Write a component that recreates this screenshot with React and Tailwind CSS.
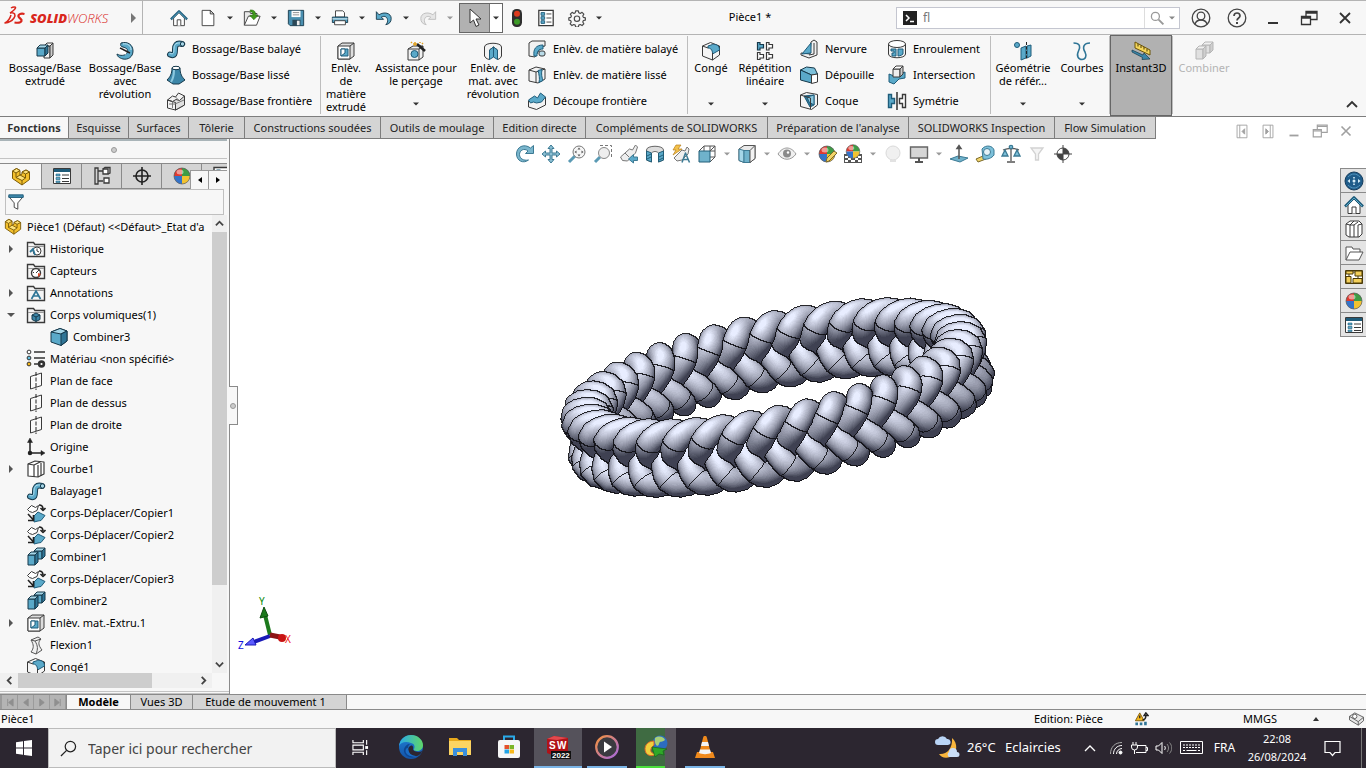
import React, { useState } from "react";
import clsx from "clsx";

const INK = "#3a3a3a";
const BLUE = "#5aa9c9";
const DEEP = "#1f5c7a";

/* ---------- icons, drawn on a 20 x 20 grid ---------- */

const Cube = ({ x, y, w = 9, h = 9, d = 4, front = BLUE, top = "#a5d6e8", side = "#2f7596", line = "#16394b" }) => (
  <g stroke={line} strokeLinejoin="round">
    <path d={`M${x} ${y}h${w}v${h}h-${w}z`} fill={front} />
    <path d={`M${x} ${y}l${d} -${d}h${w}l-${d} ${d}z`} fill={top} />
    <path d={`M${x + w} ${y}l${d} -${d}v${h}l-${d} ${d}z`} fill={side} />
  </g>
);

const Folder = () => (
  <g>
    <path d="M1.500 17.500V3.500h6l1.500 2h9.500v12z" fill="#f4f4f4" stroke={INK} strokeWidth="1.400" />
    <path d="M2 7.500h16" stroke="#9a9a9a" />
  </g>
);

const Plane = () => (
  <g fill="none" stroke={INK}>
    <path d="M4.500 5.500 15.500 2v12.500L4.500 18z" fill="#fafafa" />
    <path d="M10 1v18" stroke="#222" strokeDasharray="4 1.500" />
  </g>
);

const Sphere = () => (
  <g>
    <circle cx="10" cy="10" r="8" fill="#f4f4f4" />
    <path d="M10 10V2a8 8 0 0 1 8 8z" fill="#3f9c45" />
    <path d="M10 10H2a8 8 0 0 1 8-8z" fill="#e0392f" />
    <path d="M10 10h8a8 8 0 0 1-8 8z" fill="#f2c230" />
    <path d="M10 10v8a8 8 0 0 1-8-8z" fill="#3473c9" />
    <circle cx="10" cy="10" r="8" fill="none" stroke="#555" strokeWidth=".7" />
    <ellipse cx="8" cy="6" rx="3.500" ry="2.500" fill="#fff" opacity=".5" />
  </g>
);

const Move = () => (
  <g strokeLinejoin="round">
    <path d="M1.500 6.500l4-4 4 2 3-2-1.500 5-4.500 2-3-1z" fill="#fff" stroke={INK} />
    <path d="M8 13l4-4 3 1.500 4 2-4 5-3 .500-4 1z" fill={BLUE} stroke={DEEP} />
    <path d="M13 2c3 0 4 1.500 4 4M14.500 5 17 7.500 19.500 5M2 11l5 5.500M2 17.500h5.500V12" fill="none" stroke="#222" strokeWidth="1.600" />
  </g>
);

const Combine = ({ muted }) => {
  const tone = muted ? { front: "#e0e0e0", top: "#f0f0f0", side: "#cfcfcf", line: "#b5b5b5" } : {};
  return (
    <g>
      <Cube x={8} y={4} w={8} h={8} d={3} {...tone} />
      <Cube x={2} y={8} w={7} h={10} d={3} {...tone} />
    </g>
  );
};

const Sweep = () => (
  <g fill="none" strokeLinecap="round">
    <path d="M4 15.500c5 2 5-1 5-5s1-7 7-5.500" stroke="#16394b" strokeWidth="6" />
    <path d="M4 15.500c5 2 5-1 5-5s1-7 7-5.500" stroke={BLUE} strokeWidth="4" />
    <path d="M4 14.500c3 1 4 0 4-4s1-7 6-6.500" stroke="#b5dfee" />
    <circle cx="16.500" cy="5" r="2.200" fill="#a5d6e8" stroke="#16394b" />
  </g>
);

const CutBox = () => (
  <g stroke={INK} strokeLinejoin="round">
    <path d="M2 5l4-3h12v13l-4 3H2z" fill="#ddd" />
    <path d="M2 5h12v13H2z" fill="#fff" />
    <path d="M14 5l4-3" />
    <path d="M5 8h7v7H5z" fill={BLUE} stroke={DEEP} />
    <path d="M5 8h4v4l-4 3z" fill="#fff" stroke={DEEP} />
  </g>
);

const Part = () => (
  <g stroke="#7a5a08" strokeLinejoin="round">
    <path d="M1.500 4l4-2.500L9 3.500V8l2-1V5l4-2 3.500 2v7.500L11 18 1.500 11.500z" fill="#f3c02c" />
    <path d="M1.500 4 5 6l4-2.500-3.500-2zM11 5l3.500 2 4-2L15 3zM5 10.500 9 8l5.500 3-3.500 2.500z" fill="#fde27a" />
    <path d="M5 6v4.500M14.500 7v4M11 13.500V18" fill="none" />
  </g>
);

const Fillet = () => (
  <g stroke={INK} strokeLinejoin="round">
    <path d="M1.500 5l8-3.500 9 3.500v9l-7 5-10-4z" fill="#f5f5f5" />
    <path d="M7 7c5 0 4.500 6 4.500 6l7-4c0-5-4-6-7-5.500L7 5z" fill={BLUE} stroke={DEEP} />
    <path d="M11.500 12v7M1.500 5 7 7" fill="none" />
  </g>
);

const ListIcon = () => (
  <g>
    <path d="M1.500 2.500h17v15h-17z" fill="#fff" stroke={INK} />
    <path d="M2 3h16v3H2z" fill={DEEP} />
    <path d="M4 8h4v2H4zM4 11.500h4v2H4zM4 15h4v1.500H4z" fill={BLUE} stroke={DEEP} strokeWidth=".6" />
    <path d="M10 9h7M10 12.500h7M10 15.500h7" stroke={INK} />
  </g>
);

const ICONS = {
  home: (
    <g strokeLinejoin="round">
      <path d="M4 10v8.500h12V10l-6-6z" fill="#fff" stroke={INK} />
      <path d="M8 18.500V12h4v6.500" fill="#fff" stroke={INK} />
      <path d="M1 11.500 10 2.500l9 9" fill="none" stroke={DEEP} strokeWidth="2.600" />
      <path d="M2 11 10 3l8 8" fill="none" stroke={BLUE} />
    </g>
  ),
  page: (
    <g stroke={INK} strokeLinejoin="round">
      <path d="M3.500 1.500h9l4 4v13h-13z" fill="#fff" />
      <path d="M12.500 1.500v4h4z" fill="#ddd" />
    </g>
  ),
  open: (
    <g strokeLinejoin="round">
      <path d="M1.500 18V3h6l1 2h7v3" fill="#e9e9e9" stroke={INK} />
      <path d="M1.500 18 6 8h13l-4 10z" fill="#fff" stroke={INK} />
      <path d="M8 1c5 0 6 2 6 6h3l-5 5-4.500-5H11c0-3-1-4-3-4z" fill="#3f9a1c" stroke="#23640b" strokeWidth=".6" />
    </g>
  ),
  save: (
    <g>
      <path d="M1.500 1.500h17v17h-15l-2-2z" fill="#4a8fb0" stroke="#16394b" />
      <path d="M5 2h10v7H5z" fill="#fff" />
      <path d="M6.500 4h7M6.500 6.500h7" stroke="#888" />
      <path d="M6 12h9v6.500H6z" fill="#2b4857" />
      <path d="M11 13h3v5h-3z" fill="#eee" />
    </g>
  ),
  print: (
    <g stroke={INK} strokeLinejoin="round">
      <path d="M5 9V2h8l2 2v5z" fill="#fff" />
      <path d="M1.500 9h17v6h-17z" fill="#4a9cc0" stroke="#16394b" />
      <path d="M4 13h12v4.500H4z" fill="#fff" />
      <path d="M1.500 11h17" stroke="#fff" />
    </g>
  ),
  undo: (
    <path
      d="M1.500 3v8.500h8L7 9c4-2 7 0 7 4 0 2-1 3.500-2 4.500 4-1 6-3 6-7 0-6-8-8-13.500-4z"
      fill={BLUE}
      stroke="#16394b"
      strokeLinejoin="round"
    />
  ),
  redo: (
    <path
      d="M18.500 3v8.500h-8L13 9c-4-2-7 0-7 4 0 2 1 3.500 2 4.500-4-1-6-3-6-7 0-6 8-8 13.500-4z"
      fill="#e6e6e6"
      stroke="#bcbcbc"
      strokeLinejoin="round"
    />
  ),
  pointer: (
    <path d="M5 1v14l3.500-3 2.500 6.500 3-1.500-3-6H16z" fill="#fff" stroke="#333" strokeLinejoin="round" />
  ),
  traffic: (
    <g>
      <rect x="5" y="1" width="10" height="18" rx="4.500" fill="#2e2e2e" />
      <circle cx="10" cy="5.800" r="3" fill="#dd3a1d" />
      <circle cx="10" cy="13.800" r="3" fill="#3c9a27" />
    </g>
  ),
  options: (
    <g>
      <path d="M2 1.500h16v17H2z" fill="#fff" stroke={INK} strokeWidth="1.400" />
      <path d="M4.500 4h4v3h-4zM4.500 8.500h4v3h-4zM4.500 13h4v3h-4z" fill={BLUE} stroke={DEEP} />
      <path d="M10.500 5.500h5.500M10.500 10h5.500M10.500 14.500h5.500" stroke={INK} />
    </g>
  ),
  gear: (
    <g fill="none" stroke="#4a4a4a" strokeWidth="1.300" strokeLinejoin="round">
      <path d="M8.500 2h3l.5 2.200 1.600.7 2-1.200 2 2-1.200 2 .7 1.600 2.200.5v2.500l-2.200.5-.7 1.600 1.200 2-2 2-2-1.200-1.600.7-.5 2.200h-3l-.5-2.200-1.600-.7-2 1.200-2-2 1.200-2-.7-1.600L.9 12.300V9.800l2.200-.5.7-1.600-1.200-2 2-2 2 1.200 1.400-.7z" />
      <circle cx="10" cy="10.800" r="3" />
    </g>
  ),
  search: (
    <g fill="none" stroke="#999" strokeWidth="1.600">
      <circle cx="8" cy="8" r="5" />
      <path d="M12 12l6 6" strokeWidth="2.400" />
    </g>
  ),
  user: (
    <g fill="none" stroke="#444" strokeWidth="1.300">
      <circle cx="10" cy="10" r="8.800" />
      <circle cx="10" cy="8" r="3.800" />
      <path d="M4 16c1-3 3-4 6-4s5 1 6 4" />
    </g>
  ),
  help: (
    <g fill="none" stroke="#444" strokeWidth="1.300">
      <circle cx="10" cy="10" r="8.800" />
      <path d="M7 8c0-4 6-4 6 0 0 2-3 2-3 4.500" strokeWidth="1.700" />
      <path d="M10 14v2" strokeWidth="2" />
    </g>
  ),
  minimize: <path d="M5 15h10" stroke="currentColor" strokeWidth="2" />,
  restore: (
    <g fill="none" stroke="currentColor" strokeWidth="1.300">
      <path d="M2.500 8.500h9v8h-9zM2.500 10h9" />
      <path d="M7 8.500V3.500h11v8h-6.500M7 5h11" />
    </g>
  ),
  close: <path d="M5 5l10 10M15 5 5 15" stroke="currentColor" strokeWidth="1.800" />,
  paneLeft: (
    <g fill="none" stroke="currentColor">
      <path d="M4.500 3.500h11v14h-11zM7.500 3.500v14" />
      <path d="M13 7.500v6l-3-3z" fill="currentColor" />
    </g>
  ),
  paneRight: (
    <g fill="none" stroke="currentColor">
      <path d="M4.500 3.500h11v14h-11zM12.500 3.500v14" />
      <path d="M7.500 7.500v6l3-3z" fill="currentColor" />
    </g>
  ),

  extrude: (
    <g>
      <Cube x={9} y={5} w={6} h={12} d={3} front="#eee" top="#fff" side="#ccc" line={INK} />
      <Cube x={2} y={7} w={8} h={8} d={3} />
    </g>
  ),
  revolve: (
    <g strokeLinejoin="round">
      <path d="M6 2c7-2 12 2 12 8s-5 9-10 8c-4-1-6-3-6-5 3 2 8 2 10-1 2-4-1-5-4-6-2 0-3-2-2-4z" fill={BLUE} stroke="#16394b" />
      <path d="M8 3c5-1 8 2 8 6" fill="none" stroke="#c3e6f2" />
      <path d="M5 7l10 5" stroke="#222" strokeWidth="1.400" />
      <path d="M5 9l6 4" stroke="#fff" strokeWidth="2" />
    </g>
  ),
  sweep: <Sweep />,
  loft: (
    <g stroke="#16394b" strokeLinejoin="round">
      <path d="M6 3c0 6-2 9-5 12l6 4h6l6-4c-3-3-5-6-5-12z" fill="#3c86a8" />
      <path d="M8 5c0 6-1 9-3 12" fill="none" stroke="#8cc8df" strokeWidth="2" />
      <ellipse cx="10" cy="3" rx="4" ry="1.700" fill="#fff" />
    </g>
  ),
  boundary: (
    <g stroke={INK} strokeLinejoin="round">
      <path d="M1.500 9l5-4 3 1 3-4 6 3v9l-9 5-8-2z" fill="#f3f3f3" />
      <path d="M1.500 9l5 1.500 3.500-2 3.500 1 5-4.500v9l-9 5v-7.500z" fill="#e0e0e0" />
      <path d="M6.500 10.500V17M9.500 6l3 3M3 13h6l9-4" fill="none" stroke="#777" />
    </g>
  ),
  cutExtrude: <CutBox />,
  hole: (
    <g stroke={INK} strokeLinejoin="round">
      <path d="M2 8l5-3h10v11l-4 3H2z" fill="#f1f1f1" />
      <path d="M2 8h11v11M13 8l4-3" fill="none" />
      <ellipse cx="8.500" cy="13" rx="3.500" ry="3.500" fill={BLUE} stroke={DEEP} />
      <path d="M11 3l8 7" stroke="#222" strokeWidth="2.600" />
      <path d="M9 1v4M7 3h4M5 1l1 1M14 1v1M16 3l1-1" stroke="#e0a020" strokeWidth="1.500" />
    </g>
  ),
  cutRevolve: (
    <g stroke={INK} strokeLinejoin="round">
      <path d="M1.500 6c0-5 17-5 17 0v9c-1 3-4 3.500-4 3.500V9l-4-3-4 3v9.500s-4-.5-5-3.500z" fill="#f3f3f3" />
      <path d="M6.500 9l4-3v10l-4 2.500zM14.500 9l-4-3v10l4 2.500z" fill={BLUE} stroke={DEEP} />
    </g>
  ),
  cutSweep: (
    <g stroke={INK} strokeLinejoin="round">
      <path d="M2 4l3-2h13v5l-4 1-6 10-6-1z" fill="#f1f1f1" />
      <path d="M7 17c-1-7 2-11 9-11v4c-5 0-6 3-6 7z" fill={BLUE} stroke={DEEP} />
      <rect x="12" y="12" width="6" height="5" rx="2" fill="#b9dbe8" />
    </g>
  ),
  cutLoft: (
    <g stroke={INK} strokeLinejoin="round">
      <path d="M2 5l7-3 9 2v10l-7 4-9-2z" fill="#f3f3f3" />
      <path d="M2 5l7 2v11M9 7l9-3" fill="none" />
      <path d="M11 5.500l4-1c-1 5 0 8 1 11l-4 2c1-4 0-8-1-12z" fill={BLUE} stroke={DEEP} />
    </g>
  ),
  cutBoundary: (
    <g stroke={INK} strokeLinejoin="round">
      <path d="M1.500 10v6l8 2.500 9-4.500V6z" fill="#f3f3f3" />
      <path d="M1.500 9l6-4 3 2 3-5 5 4-4 5-5 1-3-1-3 1z" fill={BLUE} stroke={DEEP} />
    </g>
  ),
  fillet: <Fillet />,
  pattern: (
    <g strokeWidth="1.200">
      <path d="M2.500 1.500h2.500v2h3.500v3.500H5v2H2.500z" fill={BLUE} stroke="#16394b" />
      <path d="M11.500 1.500H14v2h3.500v3.500H14v2h-2.500zM2.500 11.500H5v2h3.500V17H5v1.500H2.500zM11.500 11.500H14v2h3.500V17H14v1.500h-2.500z" fill="#fff" stroke={INK} />
    </g>
  ),
  rib: (
    <g stroke={INK} strokeLinejoin="round">
      <path d="M12 3l3-2 3 2v13l-8 3-8-3v-2l9 1z" fill="#f1f1f1" />
      <path d="M12 4v10l-9 1z" fill={BLUE} stroke={DEEP} />
      <path d="M15 4v11l-5 1" fill="none" />
    </g>
  ),
  draft: (
    <g stroke="#16394b" strokeLinejoin="round">
      <path d="M1.500 5l6-3 8 1 3 6-6 1z" fill="#7cc0da" />
      <path d="M1.500 5l11 5v8l-11-3z" fill={BLUE} />
      <path d="M12.500 10l6-1v8l-6 1.500z" fill="#fff" stroke={INK} />
    </g>
  ),
  shell: (
    <g stroke={INK} strokeLinejoin="round">
      <path d="M1.500 4l6-2.500 11 2V14l-6 4.500-11-3z" fill="#f3f3f3" />
      <path d="M5 5l10-1v10l-4 2z" fill="#2f7596" stroke={DEEP} />
      <path d="M8 6l7-2v10l-5-3z" fill="#8cc8df" stroke={DEEP} />
      <path d="M1.500 4l10 3v11" fill="none" />
    </g>
  ),
  wrap: (
    <g stroke={INK}>
      <path d="M1.500 5v10c0 5 17 5 17 0V5" fill="#f3f3f3" />
      <ellipse cx="10" cy="5" rx="8.500" ry="3.500" fill="#fff" />
      <path d="M4 10h5v7H5v-3h2v-2H4zM11 10h5v5c-2 2-5 2-5 2z" fill={BLUE} stroke={DEEP} />
    </g>
  ),
  intersect: (
    <g>
      <path d="M2 9l5 2 11-4v6l-6 1-5 5-5-2z" fill={BLUE} stroke={DEEP} />
      <Cube x={6} y={4} w={7} h={8} d={3} front="#eee" top="#fff" side="#ccc" line={INK} />
    </g>
  ),
  mirror: (
    <g strokeWidth="1.400">
      <path d="M1.500 3.500h3v4h3v5h-3v4h-3z" fill={BLUE} stroke={DEEP} />
      <path d="M18.500 3.500h-3v4h-3v5h3v4h3z" fill="#fff" stroke={INK} />
      <path d="M10 1v18" stroke="#222" />
    </g>
  ),
  refGeometry: (
    <g>
      <circle cx="4" cy="4" r="2.500" fill={BLUE} stroke={DEEP} />
      <path d="M8 7l5-2v12l-5 2zM14 5l4-1v11l-4 2z" fill={BLUE} stroke={DEEP} />
      <path d="M13.500 1v18" stroke="#222" strokeDasharray="3 1.500" />
    </g>
  ),
  curves: (
    <path
      d="M1.500 2c7 0 7 4 5 8-2.500 5 0 8.500 3.500 8.500S15 15 13 11c-3-5-1-9 5-9"
      fill="none"
      stroke="#2f7596"
      strokeWidth="1.600"
    />
  ),
  instant: (
    <g>
      <path d="M4 1l15 8v5L4 7z" fill="#f5d75a" stroke="#6b5408" />
      <path d="M7 3v2.500M10 4.500V7M13 6v2.500M16 8v2.500" stroke="#4a3a08" />
      <path d="M1 9l11 5 1-2 6 6-8 .5.5-2L1 11z" fill="#3c86a8" stroke="#16394b" strokeWidth=".7" />
    </g>
  ),
  combineMuted: <Combine muted />,
  combine: <Combine />,

  part: <Part />,
  property: <ListIcon />,
  config: (
    <g fill="none" stroke={INK} strokeWidth="1.300">
      <path d="M3 2h3v16H3zM6 5h5M6 15h5" />
      <path d="M11 3h5v5h-5zM12 12h5v5h-5z" fill="#fff" />
      <path d="M11 3l2-1.500h5V7l-2 1" />
    </g>
  ),
  target: (
    <g fill="none" stroke="#222" strokeWidth="1.600">
      <circle cx="10" cy="10" r="6" />
      <path d="M10 1v18M1 10h18" />
    </g>
  ),
  appearance: <Sphere />,
  funnel: (
    <g strokeLinejoin="round">
      <path d="M2 4h16l-6 7v7l-4-2v-5z" fill="#fff" stroke={INK} />
      <path d="M2 2h16v3H2z" fill="#3c86a8" stroke={DEEP} />
    </g>
  ),
  history: (
    <g>
      <Folder />
      <circle cx="11" cy="12" r="4" fill="#fff" stroke={INK} />
      <path d="M11 9.500V12l2 1" fill="none" stroke={INK} />
      <path d="M4 13l3-3 1 3 1 3" fill="none" stroke="#2f7596" strokeWidth="1.800" />
    </g>
  ),
  sensor: (
    <g>
      <Folder />
      <circle cx="10" cy="12" r="4.500" fill="#fff" stroke={INK} strokeWidth="1.400" />
      <path d="M10 12l3-3M7 11l1 1" stroke={INK} />
      <path d="M12 12l3 1-3 3z" fill="#e04a2a" />
    </g>
  ),
  annotation: (
    <g>
      <Folder />
      <path d="M5.500 16 10 8l4.500 8M7.500 13h5" fill="none" stroke="#2f7596" strokeWidth="1.700" />
    </g>
  ),
  bodies: (
    <g>
      <Folder />
      <path d="M6 10l4-2 4 2v4.500l-4 2-4-2z" fill="#3c86a8" stroke="#16394b" />
      <path d="M6 10l4 2 4-2M10 12v4.500" fill="none" stroke="#16394b" />
    </g>
  ),
  solid: (
    <g stroke="#16394b" strokeLinejoin="round">
      <path d="M2 5l9-3.500L18 4v10l-6 4.500L2 15z" fill={BLUE} />
      <path d="M2 5l9-3.500L18 4l-6 3z" fill="#a5d6e8" />
      <path d="M12 7l6-3v10l-6 4.500z" fill="#2f7596" />
    </g>
  ),
  material: (
    <g stroke="#333">
      <path d="M8 3h11M8 9h11M8 15h5" strokeWidth="1.600" />
      <circle cx="3" cy="3" r="1.900" fill="#fff" />
      <circle cx="3" cy="9" r="1.900" fill="#64c0e0" />
      <circle cx="3" cy="15" r="1.900" fill="#f3b61c" />
      <circle cx="15.500" cy="15" r="2.400" fill="#fff" strokeWidth="2.600" />
    </g>
  ),
  plane: <Plane />,
  origin: (
    <g fill="none" stroke="#222" strokeWidth="1.500">
      <path d="M4 3v13h13" />
      <path d="M1.500 5.500 4 1l2.500 4.500zM15 13.500l4 2.500-4 2.500z" fill="#222" strokeWidth=".5" />
      <circle cx="4" cy="16" r="1.500" fill="#222" />
    </g>
  ),
  curve: (
    <g fill="#fff" stroke={INK} strokeWidth="1.200" strokeLinejoin="round">
      <path d="M2 5l7-3 9 1v12l-6 3-10-1z" />
      <path d="M2 5l6 1v12M8 6l7-3.500M12 6v12M15 4v13" fill="none" />
    </g>
  ),
  move: <Move />,
  flex: (
    <g stroke="#555" strokeLinejoin="round">
      <path d="M5 5l7-3 3 2c-3 3-3 6 1 11l-6 4-5-2c3-4 3-7 0-12z" fill="#f1f1f1" />
      <path d="M5 5l4 1 6-2M9 6c3 5 3 8 1 13" fill="none" />
    </g>
  ),

  rotate: (
    <path d="M18.500 1.500v8h-8L13 7C9 3.500 4.500 6.500 4.500 10.500c0 4 4 6.500 9 5.500-5 4-12 1-12-6s7.500-11 14-6z" fill="#7ab6cd" stroke="#3c7a94" />
  ),
  pan: (
    <path
      d="M10 1l3 3.500h-2V9h4.500V7L19 10l-3.500 3v-2H11v4.500h2L10 19l-3-3.500h2V11H4.500v2L1 10l3.500-3v2H9V4.500H7z"
      fill="#8cc0d4"
      stroke="#3c7a94"
      strokeLinejoin="round"
    />
  ),
  zoomFit: (
    <g>
      <path d="M2 18l6-6" stroke="#5a9ab4" strokeWidth="3" />
      <circle cx="12" cy="8" r="6" fill="#f6f6f6" stroke="#777" />
      <path d="M12 3.500l1.500 2h-3zM12 12.500l1.500-2h-3zM7.500 8l2-1.500v3zM16.500 8l-2-1.500v3z" fill="#555" />
    </g>
  ),
  zoomArea: (
    <g>
      <path d="M7 1.500h11.500v12" fill="none" stroke="#777" strokeDasharray="3 2" />
      <path d="M2 18l5-5" stroke="#5a9ab4" strokeWidth="3" />
      <circle cx="11" cy="9" r="5.500" fill="#eee" stroke="#888" />
    </g>
  ),
  previous: (
    <g stroke="#777" strokeLinejoin="round">
      <path d="M1.500 13l9-8 3 1 3-5 2 2-2 6-8 8-5-.500z" fill="#eee" />
      <path d="M6 9l4 4" />
      <path d="M18.500 13h-4v-2.500l-5 4.500 5 4v-2.500h4z" fill={BLUE} stroke="#3c7a94" />
    </g>
  ),
  section: (
    <g stroke="#666" strokeLinejoin="round">
      <path d="M1.500 6c0-5 17-5 17 0v10l-5 2V9c-2-2-5-2-7 0v9l-5-2z" fill="#ddd" />
      <path d="M1.500 7l5 2v9l-5-2zM18.500 7l-5 2v9l5-2z" fill={BLUE} stroke="#235e78" />
      <path d="M2 12l4-2M2 15l4-2M14 13l4-2M14 16l4-2" stroke="#235e78" />
    </g>
  ),
  dynamicText: (
    <g strokeLinejoin="round">
      <path d="M3 14l8-8 3 1 2-4 2 2-1 5-6 6-5 1z" fill="#eee" stroke="#777" />
      <path d="M5 1h5L7 5h4L2 11l3-5H2z" fill="#f3c14a" stroke="#b7801c" strokeWidth=".7" />
      <path d="M11 18.500 14.500 9l4 9.500M12 15.500h5" fill="none" stroke="#3c7a94" strokeWidth="1.500" />
    </g>
  ),
  orient: (
    <g>
      <path d="M2 7l5-5h11v11l-5 5M7 2v5M18 2l-5 5M13 2v5M18 7h-5M18 13h-5" fill="none" stroke="#555" />
      <path d="M2 7h11v11H2z" fill="#6fb2cb" stroke="#235e78" />
    </g>
  ),
  display: (
    <g strokeLinejoin="round">
      <path d="M2 5l5-3.500h11v13L13 18.500l-6 0-5-2z" fill="#e9e9e9" stroke="#555" />
      <path d="M2 5l5 1.500v12l-5-2z" fill="#a5d6e8" stroke="#3c7a94" />
      <path d="M7 6.500h6v12H7z" fill="#6fb2cb" stroke="#3c7a94" />
      <path d="M13 6.500l5-5v13l-5 4z" fill="#f3f3f3" stroke="#555" />
    </g>
  ),
  hideShow: (
    <g>
      <path d="M1 10c5-8 13-8 18 0-5 7-13 7-18 0z" fill="#f0f0f0" stroke="#999" />
      <circle cx="10" cy="9.500" r="4" fill="#8a8a8a" />
      <circle cx="11" cy="8.500" r="1.200" fill="#fff" />
    </g>
  ),
  editAppearance: (
    <g>
      <Sphere />
      <path d="M9 18l1-4 7-7 3 2-8 8z" fill="#f3d56a" stroke="#7b6a2a" />
    </g>
  ),
  scene: (
    <g>
      <path d="M1 10h18v9H1z" fill="#555" />
      <path d="M2 12h3v2H2zM15 12h3v2h-3zM5 14h3v2H5zM12 14h3v2h-3zM8 16h4v2H8zM2 16h3v2H2zM15 16h3v2h-3z" fill="#fff" />
      <g transform="translate(1.500 -1) scale(.85)">
        <Sphere />
      </g>
    </g>
  ),
  render: (
    <g>
      <circle cx="10" cy="9" r="7" fill="#f0f0f0" stroke="#dadada" />
      <path d="M7 16h6v2H7z" fill="#e2e2e2" />
    </g>
  ),
  monitor: (
    <g>
      <path d="M1.500 3h17v11h-17z" fill="#d6d6d6" stroke="#666" strokeWidth="1.400" />
      <path d="M10 14v3M6 18h8" stroke="#555" strokeWidth="2" />
    </g>
  ),
  normal: (
    <g>
      <path d="M1 15l8-3 10 2-8 4z" fill="#6fb2cb" stroke="#3c7a94" />
      <path d="M10 15V3M8 4.500l2-3 2 3z" fill="#555" stroke="#555" strokeWidth="1.500" />
    </g>
  ),
  measure: (
    <g>
      <path d="M1 15l7-3 3 3-8 3z" fill="#f3d56a" stroke="#7b6a2a" />
      <path d="M7 5c4-5 11-3 12 1v5c-2 3-7 5-11 4z" fill="#7cc0da" stroke="#3c7a94" />
      <circle cx="12" cy="8" r="3.500" fill="#e6f2f7" stroke="#3c7a94" />
    </g>
  ),
  mass: (
    <g fill="none" stroke="#3c7a94" strokeWidth="1.300">
      <path d="M10 2v15M6 18h8M2 6c5-2 11-2 16 0" stroke="#555" />
      <circle cx="10" cy="3" r="1.700" fill="#7cc0da" />
      <path d="M1 12l3-6 3 6zM13 12l3-6 3 6z" fill="#7cc0da" />
    </g>
  ),
  filterMuted: <path d="M4 4h12l-4.500 6v6h-3v-6z" fill="#f4f4f4" stroke="#d2d2d2" strokeWidth="1.300" />,
  centerMass: (
    <g>
      <circle cx="10" cy="10" r="6" fill="#fff" stroke="#444" />
      <path d="M10 10V4a6 6 0 0 1 6 6zM10 10v6a6 6 0 0 1-6-6z" fill="#444" />
      <path d="M10 1v18M1 10h18" stroke="#444" />
    </g>
  ),

  globe: (
    <g>
      <circle cx="10" cy="10" r="9" fill="#1f5c8a" stroke="#153c5c" />
      <path d="M4 6c4-4 8-4 12 0M4 14c4 4 8 4 12 0" fill="none" stroke="#4f93bd" />
      <path d="M6 8l-2.500 2L6 12zM14 8l2.500 2-2.500 2zM9 6h2l-1 2.500zM9 14h2l-1-2.500z" fill="#d8eef8" />
      <circle cx="10" cy="10" r="1.500" fill="#d8eef8" />
    </g>
  ),
  library: (
    <g fill="#fff" stroke={INK} strokeLinejoin="round">
      <path d="M2 5l4-3h9l3 3v10l-3 3H5l-3-2z" />
      <path d="M2 5l4 1v12M6 6l4-4M6 6h4v12M10 6l4-3M14 6v12M14 6l4-1" fill="none" />
    </g>
  ),
  folderOpen: (
    <g fill="#fff" stroke="#555" strokeLinejoin="round">
      <path d="M2 17V4h6l1 2h7v3" />
      <path d="M2 17l4-8h13l-4 8z" />
    </g>
  ),
  palette: (
    <g fill="#f3cf5a" stroke="#4a3a08">
      <path d="M1.500 3.500h17v13h-17z" fill="#fff" />
      <path d="M2 4h7v3H2zM11 4h7v5h-7zM2 9.500h5v6.500H2zM9 11.500h9V16H9z" />
      <path d="M9 5h2M5 7v2M14 9v2" />
    </g>
  ),
};

const Icon = ({ name, className = "size-5" }) => (
  <svg viewBox="0 0 20 20" className={clsx("shrink-0", className)} aria-hidden="true">
    {ICONS[name]}
  </svg>
);

const Caret = ({ className = "text-[#333]" }) => (
  <svg viewBox="0 0 6 4" className={clsx("h-1 w-[6px] shrink-0", className)} aria-hidden="true">
    <path d="M0 .5h6l-3 3z" fill="currentColor" />
  </svg>
);

/* ---------- braided ring ---------- */

const rad = (d) => (d * Math.PI) / 180;
const add = (a, b, k = 1) => [a[0] + b[0] * k, a[1] + b[1] * k, a[2] + b[2] * k];
const dot = (a, b) => a[0] * b[0] + a[1] * b[1] + a[2] * b[2];
const cross = (a, b) => [
  a[1] * b[2] - a[2] * b[1],
  a[2] * b[0] - a[0] * b[2],
  a[0] * b[1] - a[1] * b[0],
];
const unit = (a) => {
  const l = Math.hypot(a[0], a[1], a[2]);
  return [a[0] / l, a[1] / l, a[2] / l];
};

const RING = { cx: 548, cy: 230, radius: 191, tube: 12.5, height: 27, depth: 14, links: 40 };
const STEPS = 24; // samples along one strand period
const SIDES = 20; // facets around the tube
const LEVELS = 28; // tones from shadow to highlight
const VIEW = { w: 1136, h: 526 };

const roll = rad(12);
const pitch = rad(14.2);
const U = [Math.cos(roll), -Math.sin(roll), 0];
const N = [-Math.sin(roll) * Math.cos(pitch), -Math.cos(roll) * Math.cos(pitch), Math.sin(pitch)];
const W = [Math.sin(roll) * Math.sin(pitch), Math.cos(roll) * Math.sin(pitch), Math.cos(pitch)];
const LIGHT = unit([-0.2, -0.62, 0.75]);

const outward = (t) => add(U.map((v) => -v * Math.cos(t)), W, Math.sin(t));

// one strand that goes three times round the ring
function strand(t) {
  const phase = (t * RING.links) / 3;
  return add(
    outward(t).map((v) => v * (RING.radius + RING.depth * Math.sin(2 * phase))),
    N,
    RING.height * Math.sin(phase)
  );
}

function tubeRings() {
  const total = RING.links * STEPS;
  const rings = [];
  for (let i = 0; i <= total; i++) {
    const t = (i / total) * Math.PI * 6;
    const c = strand(t);
    const tangent = unit(add(strand(t + 0.001), strand(t - 0.001), -1));
    const o = outward(t);
    const n = unit(add(o, tangent, -dot(o, tangent)));
    const b = cross(tangent, n);
    const pts = [];
    for (let j = 0; j < SIDES; j++) {
      const a = (j / SIDES) * Math.PI * 2;
      const dir = add(n.map((v) => v * Math.cos(a)), b, Math.sin(a));
      const p = add(c, dir, RING.tube);
      pts.push({ dir, x: p[0] + RING.cx, y: p[1] + RING.cy, z: p[2], i });
    }
    rings.push(pts);
  }
  return rings;
}

// depth buffer: nearest surface per cell, with its tone and its place on the strand
function rasterise() {
  const size = VIEW.w * VIEW.h;
  const depth = new Float32Array(size).fill(-1e9);
  const tone = new Int16Array(size).fill(-1);
  const along = new Float32Array(size).fill(-1e6);

  const triangle = (a, b, c) => {
    const area = (b.x - a.x) * (c.y - a.y) - (c.x - a.x) * (b.y - a.y);
    if (Math.abs(area) < 1e-6) return;
    const x0 = Math.floor(Math.min(a.x, b.x, c.x));
    const x1 = Math.ceil(Math.max(a.x, b.x, c.x));
    const y0 = Math.floor(Math.min(a.y, b.y, c.y));
    const y1 = Math.ceil(Math.max(a.y, b.y, c.y));
    for (let y = y0; y <= y1; y++) {
      for (let x = x0; x <= x1; x++) {
        const px = x + 0.5;
        const py = y + 0.5;
        const wb = ((px - a.x) * (c.y - a.y) - (c.x - a.x) * (py - a.y)) / area;
        const wc = ((b.x - a.x) * (py - a.y) - (px - a.x) * (b.y - a.y)) / area;
        const wa = 1 - wb - wc;
        if (wa < -1e-4 || wb < -1e-4 || wc < -1e-4) continue;
        const z = wa * a.z + wb * b.z + wc * c.z;
        const at = y * VIEW.w + x;
        if (z <= depth[at]) continue;
        const n = unit([0, 1, 2].map((k) => wa * a.dir[k] + wb * b.dir[k] + wc * c.dir[k]));
        const d = Math.max(0, dot(n, LIGHT));
        depth[at] = z;
        along[at] = wa * a.i + wb * b.i + wc * c.i;
        tone[at] = Math.min(LEVELS - 1, Math.round((0.1 + 0.8 * d + 0.16 * Math.pow(d, 12)) * (LEVELS - 1)));
      }
    }
  };

  const rings = tubeRings();
  for (let i = 0; i + 1 < rings.length; i++) {
    for (let j = 0; j < SIDES; j++) {
      const k = (j + 1) % SIDES;
      triangle(rings[i][j], rings[i][k], rings[i + 1][k]);
      triangle(rings[i][j], rings[i + 1][k], rings[i + 1][j]);
    }
  }
  return { tone, along };
}

// horizontal runs of the cells that pass the test, as one path
function runs(test) {
  let d = "";
  for (let y = 100; y < 350; y++) {
    let start = -1;
    for (let x = 300; x <= 800; x++) {
      const on = x < 800 && test(x, y);
      if (on && start < 0) start = x;
      if (!on && start >= 0) {
        d += `M${start} ${y}h${x - start}v1h${start - x}z`;
        start = -1;
      }
    }
  }
  return d;
}

function buildRing() {
  const { tone, along } = rasterise();
  const total = RING.links * STEPS;
  const patch = (v) => Math.floor((v - 3) / (STEPS / 4));
  const split = (p, q) => {
    const a = along[p];
    const b = along[q];
    if (a < 0 && b < 0) return false;
    const gap = Math.abs(a - b);
    if (Math.min(gap, Math.abs(total - gap)) > 5) return true;
    return patch(a) !== patch(b);
  };
  const layers = [];
  for (let l = 0; l < LEVELS; l++) {
    const k = l / (LEVELS - 1);
    const fill = `rgb(${Math.round(42 + 190 * k)},${Math.round(44 + 193 * k)},${Math.round(60 + 195 * k)})`;
    layers.push({ fill, d: runs((x, y) => tone[y * VIEW.w + x] >= l) });
  }
  const lines = runs((x, y) => {
    const p = y * VIEW.w + x;
    return split(p, p + 1) || split(p, p + VIEW.w);
  });
  return { layers, lines };
}

const BRAID = buildRing();

const Model = () => (
  <svg viewBox="0 0 1136 526" className="min-h-0 w-full flex-1" role="img" aria-label="Pièce1">
    {BRAID.layers.map((l) => (
      <path key={l.fill} d={l.d} fill={l.fill} />
    ))}
    <path d={BRAID.lines} fill="#101014" opacity=".9" />
    <g transform="translate(40 467)" fontFamily="Noto Sans" fontSize="10">
      <path d="M0 0-5-20" stroke="#1c7a1c" strokeWidth="4" />
      <path d="M-6-28-10-17l8-2z" fill="#1c7a1c" stroke="#0e4d0e" />
      <path d="M0 1-16 7" stroke="#1a1ab8" strokeWidth="4" />
      <path d="M-25 10-17 3l3 7z" fill="#5c5cff" stroke="#1a1ab8" />
      <path d="M0 0 10 2" stroke="#8c1515" strokeWidth="5" />
      <circle cx="12" cy="3" r="4" fill="#c81414" />
      <text x="-11" y="-30" fill="#0a8a0a">Y</text>
      <text x="15" y="8" fill="#f01010">X</text>
      <text x="-32" y="14" fill="#1010e0">Z</text>
    </g>
  </svg>
);

/* ---------- title bar ---------- */

const QUICK = [
  { icon: "home", label: "Accueil" },
  { icon: "page", label: "Nouveau", menu: true },
  { icon: "open", label: "Ouvrir", menu: true },
  { icon: "save", label: "Enregistrer", menu: true },
  { icon: "print", label: "Imprimer", menu: true },
  { icon: "undo", label: "Annuler", menu: true },
  { icon: "redo", label: "Rétablir", menu: true },
];

const Logo = () => (
  <div className="flex w-[118px] items-center text-[#d9261c]">
    <svg viewBox="0 0 22 22" className="mb-1 ml-1 h-[22px] w-[22px]" fill="none" stroke="currentColor" strokeWidth="1.500" strokeLinejoin="round" aria-hidden="true">
      <path d="M7 3c2-1.500 5-1.500 4.500 0S9 6 6 8" />
      <path d="M6 8c5-1 6 2 4 5s-5 4.500-9 5c3-1.500 5-4.500 6-8" />
      <path d="M20.500 9c-4-1-6.500.5-6 2.500S18.500 14 17.500 16s-4 2-7 1.500" strokeWidth="2.200" />
    </svg>
    <span className="ml-1 font-['Open_Sans'] text-[13px] leading-5 italic">
      <b className="font-extrabold">SOLID</b>
      <span className="font-light">WORKS</span>
    </span>
  </div>
);

const TitleBar = () => {
  const [query, setQuery] = useState("fl");
  return (
    <header className="flex h-[35px] shrink-0 items-center border-t border-b border-[#b4b4b4] bg-[#f7f7f7]">
      <Logo />
      <button aria-label="Menu" className="flex w-6 justify-center pl-2">
        <svg viewBox="0 0 6 10" className="h-[10px] w-[6px]"><path d="M0 0v10l5-5z" fill="#777" /></svg>
      </button>
      <span className="h-full w-px bg-[#b4b4b4]" />
      <nav className="flex items-center pl-[27px]">
        {QUICK.map((q) => (
          <button key={q.icon} aria-label={q.label} className={clsx("flex items-center", q.menu ? "w-11 gap-[10px] pl-1" : "w-[25px]")}>
            <Icon name={q.icon} className="size-[18px]" />
            {q.menu && <Caret className={q.icon === "redo" ? "text-[#999]" : "text-[#333]"} />}
          </button>
        ))}
        <div className="flex h-[30px] w-11 border border-[#666] bg-white">
          <button aria-label="Sélectionner" className="flex w-[30px] items-center justify-center border-r border-[#777] bg-[#b1b1b1]">
            <Icon name="pointer" />
          </button>
          <button aria-label="Options de sélection" className="flex flex-1 items-center justify-center">
            <Caret />
          </button>
        </div>
        <button aria-label="Reconstruire" className="flex w-7 justify-center"><Icon name="traffic" /></button>
        <button aria-label="Propriétés" className="flex w-[30px] justify-center"><Icon name="options" className="size-[18px]" /></button>
        <button aria-label="Options" className="ml-[7px] flex w-9 items-center gap-[10px]"><Icon name="gear" className="size-[18px]" /><Caret /></button>
      </nav>
      <h1 className="flex-1 text-center text-[11px]">Pièce1 *</h1>
      <div className="flex h-[22px] w-[284px] items-center border border-[#c4c6d0] bg-white">
        <span className="mx-[6px] flex h-[14px] w-[14px] items-center bg-[#222]">
          <svg viewBox="0 0 14 14" className="size-full" fill="none" stroke="#fff" strokeWidth="1.500"><path d="M3 4l3 3-3 3M7 10.500h4" /></svg>
        </span>
        <input
          aria-label="Rechercher une commande"
          className="w-0 flex-1 bg-transparent text-[12px] text-[#777] outline-none"
          value={query}
          onChange={(e) => setQuery(e.target.value)}
        />
        <button aria-label="Rechercher" className="flex h-full w-[35px] items-center justify-between border-l border-[#ddd] px-1">
          <Icon name="search" className="size-4" />
          <Caret className="text-[#888]" />
        </button>
      </div>
      <div className="flex pl-[3px] pr-[3px] text-[#333]">
        {["user", "help", "minimize", "restore", "close"].map((n) => (
          <button key={n} aria-label={n} className="flex w-9 justify-center"><Icon name={n} /></button>
        ))}
      </div>
    </header>
  );
};

/* ---------- ribbon ---------- */

const Big = ({ icon, lines, width, menu, active, disabled }) => (
  <button
    disabled={disabled}
    className={clsx(
      "flex h-full shrink-0 flex-col items-center pt-[6px] pb-[10px]",
      width,
      active && "bg-[#b1b1b1] outline -outline-offset-1 outline-[#666]",
      disabled && "text-[#b4b4b4]"
    )}
  >
    <Icon name={icon} />
    {lines.map((l) => (
      <span key={l} className="leading-[13px] whitespace-nowrap">{l}</span>
    ))}
    {menu && <Caret className="mt-auto text-[#333]" />}
  </button>
);

const Stack = ({ items, width }) => (
  <div className={clsx("flex h-full shrink-0 flex-col pt-px", width)}>
    {items.map(([icon, label]) => (
      <button key={label} className="flex h-[26px] items-center gap-[6px] whitespace-nowrap">
        <Icon name={icon} />
        {label}
      </button>
    ))}
  </div>
);

const Divider = () => <span className="mt-px h-[78px] w-px shrink-0 bg-[#bdbdbd]" />;

const Ribbon = () => (
  <div className="flex h-[82px] shrink-0 overflow-hidden border-b border-[#7d7d7d] bg-[#f7f7f7] text-[11px]">
    <Big icon="extrude" width="ml-[5px] w-20" lines={["Bossage/Base", "extrudé"]} />
    <Big icon="revolve" width="w-20" lines={["Bossage/Base", "avec", "révolution"]} />
    <Stack
      width="w-[155px] pl-px"
      items={[["sweep", "Bossage/Base balayé"], ["loft", "Bossage/Base lissé"], ["boundary", "Bossage/Base frontière"]]}
    />
    <Divider />
    <Big icon="cutExtrude" width="w-[50px]" lines={["Enlèv.", "de", "matière", "extrudé"]} />
    <Big icon="hole" width="w-[90px]" menu lines={["Assistance pour", "le perçage"]} />
    <Big icon="cutRevolve" width="w-[64px]" lines={["Enlèv. de", "mat. avec", "révolution"]} />
    <Stack
      width="w-[162px] pl-[2px]"
      items={[["cutSweep", "Enlèv. de matière balayé"], ["cutLoft", "Enlèv. de matière lissé"], ["cutBoundary", "Découpe frontière"]]}
    />
    <Divider />
    <Big icon="fillet" width="w-[46px]" menu lines={["Congé"]} />
    <Big icon="pattern" width="w-[62px]" menu lines={["Répétition", "linéaire"]} />
    <Stack width="w-[88px] pl-[3px]" items={[["rib", "Nervure"], ["draft", "Dépouille"], ["shell", "Coque"]]} />
    <Stack width="w-[106px] pl-[3px]" items={[["wrap", "Enroulement"], ["intersect", "Intersection"], ["mirror", "Symétrie"]]} />
    <Divider />
    <Big icon="refGeometry" width="w-16" menu lines={["Géométrie", "de référ..."]} />
    <Big icon="curves" width="w-[54px]" menu lines={["Courbes"]} />
    <Divider />
    <Big icon="instant" width="w-[62px]" active lines={["Instant3D"]} />
    <Divider />
    <Big icon="combineMuted" width="w-[62px]" disabled lines={["Combiner"]} />
    <button aria-label="Réduire le ruban" className="mt-auto mr-2 mb-2 ml-auto">
      <svg viewBox="0 0 12 8" className="h-2 w-3" fill="none" stroke="#333" strokeWidth="1.800"><path d="M1 7l5-5 5 5" /></svg>
    </button>
  </div>
);

const TABS = [
  ["Fonctions", "w-[69px]"],
  ["Esquisse", "w-[60px]"],
  ["Surfaces", "w-[60px]"],
  ["Tôlerie", "w-[56px]"],
  ["Constructions soudées", "w-[136px]"],
  ["Outils de moulage", "w-[113px]"],
  ["Edition directe", "w-[92px]"],
  ["Compléments de SOLIDWORKS", "w-[182px]"],
  ["Préparation de l'analyse", "w-[141px]"],
  ["SOLIDWORKS Inspection", "w-[146px]"],
  ["Flow Simulation", "w-[101px]"],
];

const RibbonTabs = () => {
  const [tab, setTab] = useState("Fonctions");
  return (
    <div className="flex h-[22px] shrink-0 items-stretch bg-white text-[11px]">
      {TABS.map(([label, width]) => (
        <button
          key={label}
          onClick={() => setTab(label)}
          className={clsx(
            "shrink-0 border-r border-b border-[#7d7d7d] pt-px whitespace-nowrap",
            width,
            tab === label ? "bg-[#f7f7f7] font-bold text-[#333]" : "bg-[#d4d4d4] text-[#222]"
          )}
        >
          {label}
        </button>
      ))}
      <div className="ml-auto flex items-end pr-[7px] text-[#a0a0a0]">
        {["paneLeft", "paneRight", "minimize", "restore", "close"].map((n) => (
          <button key={n} aria-label={n} className="flex h-4 w-[26px] items-center justify-center"><Icon name={n} className="size-[18px]" /></button>
        ))}
      </div>
    </div>
  );
};

/* ---------- feature tree ---------- */

const TREE = [
  { icon: "history", label: "Historique", open: false },
  { icon: "sensor", label: "Capteurs" },
  { icon: "annotation", label: "Annotations", open: false },
  { icon: "bodies", label: "Corps volumiques(1)", open: true },
  { icon: "solid", label: "Combiner3", child: true },
  { icon: "material", label: "Matériau <non spécifié>" },
  { icon: "plane", label: "Plan de face" },
  { icon: "plane", label: "Plan de dessus" },
  { icon: "plane", label: "Plan de droite" },
  { icon: "origin", label: "Origine" },
  { icon: "curve", label: "Courbe1", open: false },
  { icon: "sweep", label: "Balayage1" },
  { icon: "move", label: "Corps-Déplacer/Copier1" },
  { icon: "move", label: "Corps-Déplacer/Copier2" },
  { icon: "combine", label: "Combiner1" },
  { icon: "move", label: "Corps-Déplacer/Copier3" },
  { icon: "combine", label: "Combiner2" },
  { icon: "cutExtrude", label: "Enlèv. mat.-Extru.1", open: false },
  { icon: "flex", label: "Flexion1" },
  { icon: "fillet", label: "Congé1" },
];

const Chevron = ({ d }) => (
  <svg viewBox="0 0 10 10" className="size-[9px]" fill="none" stroke="#444" strokeWidth="2" aria-hidden="true"><path d={d} /></svg>
);

const TreeRow = ({ item }) => (
  <li className={clsx("flex h-[22px] shrink-0 items-center whitespace-nowrap", item.child && "pl-[23px]")}>
    <span className="flex w-[26px] justify-center pr-1">
      {item.open !== undefined && (
        <svg viewBox="0 0 8 8" className="size-2">
          <path d={item.open ? "M0 2h8l-4 4z" : "M2 0v8l4-4z"} fill="#555" />
        </svg>
      )}
    </span>
    <Icon name={item.icon} />
    <span className="pl-1">{item.label}</span>
  </li>
);

const Sidebar = () => {
  const [filter, setFilter] = useState("");
  return (
    <aside className="relative z-10 flex w-[230px] shrink-0 flex-col border-r border-[#8a8a8a] bg-[#f7f7f7] text-[11px]">
      <div className="mr-[2px] flex h-5 shrink-0 items-center justify-center border-b border-[#c4c4c4] border-t-2 border-t-[#a9b4b8]">
        <span className="size-[6px] rounded-full border border-[#999] bg-[#ccc]" />
      </div>
      <div className="relative mt-1 mr-[2px] flex h-[26px] shrink-0 overflow-hidden border-t border-[#8a8a8a]">
        {["part", "property", "config", "target", "appearance", "options"].map((n, i) => (
          <button
            key={n}
            aria-label={n}
            className={clsx(
              "flex shrink-0 items-center justify-center border-r border-[#8a8a8a]",
              i === 0 ? "w-[42px] bg-[#f7f7f7]" : "w-10 border-b bg-[#d4d4d4]"
            )}
          >
            <Icon name={n} />
          </button>
        ))}
        <div className="absolute right-0 bottom-0 flex border-t border-l border-[#999] bg-[#f7f7f7]">
          <button aria-label="Onglet précédent" className="flex h-[18px] w-[18px] items-center justify-center border-r border-[#999]">
            <svg viewBox="0 0 4 6" className="h-[6px] w-1"><path d="M4 0v6L0 3z" /></svg>
          </button>
          <button aria-label="Onglet suivant" className="flex h-[18px] w-[18px] items-center justify-center">
            <svg viewBox="0 0 4 6" className="h-[6px] w-1"><path d="M0 0v6l4-3z" /></svg>
          </button>
        </div>
      </div>
      <label className="mr-[5px] ml-[5px] flex h-[26px] shrink-0 items-center border border-[#c0c0c0] pl-px">
        <Icon name="funnel" className="size-[18px]" />
        <input aria-label="Filtrer l'arbre" className="w-0 flex-1 bg-transparent outline-none" value={filter} onChange={(e) => setFilter(e.target.value)} />
      </label>
      <div className="flex min-h-0 flex-1">
        <ul className="min-h-0 w-0 flex-1 overflow-hidden pt-px">
          <li className="flex h-[22px] items-center whitespace-nowrap">
            <Icon name="part" className="ml-1 size-[18px]" />
            <span className="pl-[5px]">{"Pièce1 (Défaut) <<Défaut>_Etat d'a"}</span>
          </li>
          {TREE.map((item) => (
            <TreeRow key={item.label + item.icon} item={item} />
          ))}
        </ul>
        <div className="mr-[2px] flex w-[15px] flex-col items-center bg-[#f0f0f0]">
          <span className="flex h-[17px] items-center"><Chevron d="M1 7l4-4 4 4" /></span>
          <span className="w-full flex-[353] bg-[#cdcdcd]" />
          <span className="flex-[71]" />
          <span className="flex h-[17px] items-center"><Chevron d="M1 3l4 4 4-4" /></span>
        </div>
      </div>
      <div className="mr-[17px] flex h-[15px] shrink-0 items-center bg-[#f0f0f0]">
        <span className="flex w-[18px] justify-center"><Chevron d="M7 1L3 5l4 4" /></span>
        <span className="h-full w-[134px] bg-[#cdcdcd]" />
        <span className="ml-auto flex w-[18px] justify-center"><Chevron d="M3 1l4 4-4 4" /></span>
      </div>
      <div className="mt-[3px] h-[3px] shrink-0 border-y border-[#c4c4c4]" />
      <button
        aria-label="Replier le panneau"
        className="absolute top-[247px] -right-[9px] flex h-[39px] w-[9px] items-center justify-center border border-l-0 border-[#8a8a8a] bg-[#f7f7f7]"
      >
        <span className="size-[6px] rounded-full border border-[#999] bg-[#ccc]" />
      </button>
    </aside>
  );
};

/* ---------- graphics area ---------- */

const VIEW_TOOLS = [
  ["rotate"], ["pan"], ["zoomFit"], ["zoomArea"], ["previous"], ["section"], ["dynamicText"],
  ["orient", true], ["display", true], ["hideShow", true], ["editAppearance"], ["scene", true],
  ["render"], ["monitor", true], ["normal"], ["measure"], ["mass"], ["filterMuted"], ["centerMass"],
];

const Viewport = () => (
  <main className="relative flex min-w-0 flex-1 flex-col bg-white">
    <div className="flex h-[29px] shrink-0 items-center justify-center pr-2">
      {VIEW_TOOLS.map(([name, menu]) => (
        <button key={name} aria-label={name} className={clsx("flex shrink-0 items-center", menu ? "w-10" : "w-[26px]")}>
          <span className="flex w-[26px] justify-center"><Icon name={name} /></span>
          {menu && <span className="flex w-[14px] justify-center"><Caret className="text-[#999]" /></span>}
        </button>
      ))}
    </div>
    <Model />
    <div className="absolute top-[29px] right-0 flex w-[26px] flex-col border-t border-l border-[#8a8a8a] bg-[#e4e4e4]">
      {["globe", "home", "library", "folderOpen", "palette", "appearance", "property"].map((n) => (
        <button key={n} aria-label={n} className="flex h-6 items-center justify-center border-b border-[#8a8a8a]">
          <Icon name={n} />
        </button>
      ))}
    </div>
  </main>
);

/* ---------- bottom bars ---------- */

const BottomTabs = () => (
  <div className="flex h-4 shrink-0 border-t border-b border-[#8a8a8a] bg-[#f7f7f7] text-[11px] leading-[12px]">
    <div className="flex w-[67px] gap-px border-r border-[#8a8a8a] bg-[#9b9b9b] pl-[2px]">
      {["M3 1v8M9 1v8L4 5z", "M8 1v8L3 5z", "M3 1v8l5-4z", "M8 1v8M2 1v8l5-4z"].map((d) => (
        <button key={d} aria-label="Onglet" className="flex w-[15px] items-center justify-center bg-[#b4b4b4]">
          <svg viewBox="0 0 10 10" className="size-[9px]" fill="#8f8f8f" stroke="#8f8f8f"><path d={d} /></svg>
        </button>
      ))}
    </div>
    <button className="w-[64px] border-r border-[#8a8a8a] font-bold">Modèle</button>
    <button className="w-[62px] border-r border-[#8a8a8a] bg-[#d4d4d4]">Vues 3D</button>
    <button className="w-[154px] border-r border-[#8a8a8a] bg-[#d4d4d4] pr-2">Etude de mouvement 1</button>
  </div>
);

const StatusBar = () => (
  <footer className="flex h-[18px] shrink-0 items-center bg-[#f7f7f7] text-[11px]">
    <span className="pl-px">Pièce1</span>
    <span className="ml-auto w-[100px]">Edition: Pièce</span>
    <svg viewBox="0 0 16 16" className="h-[14px] w-[15px]">
      <path d="M6 1 1 10h10z" fill="#f3b61c" stroke="#7a5200" />
      <path d="M6 4v3" stroke="#222" strokeWidth="1.500" />
      <path d="M9 9c3 0 4-2 4-5M11 4l2-3 2.500 3z" fill="none" stroke="#222" strokeWidth="1.600" />
      <path d="M1 15V12h3v3zM6 15v-3h3v3zM11 15v-4h3v4z" fill="#2f7596" />
    </svg>
    <span className="w-[128px] text-right">MMGS</span>
    <span className="ml-[7px] flex w-16 items-center justify-center">
      <svg viewBox="0 0 6 4" className="h-1 w-[6px]"><path d="M0 4h6L3 0z" fill="#333" /></svg>
    </span>
    <svg viewBox="0 0 18 16" className="mr-px h-[14px] w-[17px]" fill="#e8e8e8" stroke="#555">
      <path d="M1 5l6-4 10 5v4l-6 5L1 9z" />
      <circle cx="7" cy="5" r="2.500" fill="#fff" />
      <path d="M1 5l10 6v4M11 11l6-5" fill="none" />
    </svg>
  </footer>
);

const Task = ({ label, className, bar, children }) => (
  <button aria-label={label} className={clsx("flex h-full shrink-0 flex-col items-center", className)}>
    <span className="flex flex-1 items-center justify-center">{children}</span>
    <span className={clsx("h-[2px] w-full", bar)} />
  </button>
);

const Taskbar = () => {
  const [search, setSearch] = useState("");
  return (
    <div className="flex h-10 shrink-0 items-center bg-[#2c2630] text-white">
      <button aria-label="Démarrer" className="flex w-12 justify-center">
        <svg viewBox="0 0 16 16" className="size-4" fill="#fff"><path d="M0 2.200 7 1.200v6.300H0zM8 1l8-1v7.500H8zM0 8.500h7v6.300l-7-1zM8 8.500h8V16l-8-1z" /></svg>
      </button>
      <label className="flex h-full w-[288px] items-center border border-[#bbb] bg-[#f2f2f2]">
        <svg viewBox="0 0 18 18" className="ml-[11px] size-[17px]" fill="none" stroke="#222" strokeWidth="1.300"><circle cx="11" cy="7" r="5.500" /><path d="M7 11l-6 6" /></svg>
        <input
          aria-label="Taper ici pour rechercher"
          placeholder="Taper ici pour rechercher"
          className="w-0 flex-1 bg-transparent pl-[11px] text-[14px] text-[#222] outline-none placeholder:text-[#444]"
          value={search}
          onChange={(e) => setSearch(e.target.value)}
        />
      </label>
      <Task label="Vue des tâches" className="w-12">
        <svg viewBox="0 0 18 18" className="size-[17px]" fill="none" stroke="#fff" strokeWidth="1.200">
          <path d="M1 1v3h11V1M1 17v-3h11v3M1 6.500h11v5H1zM15.500 1v5M15.500 12v5" />
          <path d="M15.500 7.500v3" strokeWidth="3" />
        </svg>
      </Task>
      <Task label="Edge" className="ml-[3px] w-12">
        <svg viewBox="0 0 24 24" className="size-6">
          <defs>
            <linearGradient id="edgeTop" x1="0" x2="1"><stop stopColor="#2aa9e8" /><stop offset="1" stopColor="#5fd668" /></linearGradient>
            <linearGradient id="edgeLow" x1="0" x2="0" y2="1"><stop stopColor="#1f7fd6" /><stop offset="1" stopColor="#1353a6" /></linearGradient>
          </defs>
          <circle cx="12" cy="12" r="12" fill="url(#edgeLow)" />
          <path d="M0 11C1 4 6 0 12 0c7 0 12 5 12 10 0 4-3 6-6 6-2 0-4-1-3-2 1-2 1-5-3-6C7 6 2 7 0 11z" fill="url(#edgeTop)" />
          <path d="M9 12c-2 4 1 9 7 10-7 2-12-3-11-8 1-3 3-5 6-5-1 1-2 2-2 3z" fill="#0e4691" />
          <path d="M14 14c0 2 3 3 6 3 2 0 3-1 3.500-2-1 4-4 6-7 6-5 0-8-4-7-8 1-2 3-3 4-2s.5 2 .5 3z" fill="#2c2630" />
          <path d="M9 13c0 5 4 8 8 8-2 1-7 1-10-3-1-3 0-5 2-5z" fill="#1a6cc4" />
        </svg>
      </Task>
      <Task label="Explorateur" className="ml-px w-12">
        <svg viewBox="0 0 22 20" className="h-5 w-[22px]">
          <path d="M0 1h8l2 2h12v15H0z" fill="#e8a91c" />
          <path d="M0 4h22v14H0z" fill="#fcd462" />
          <path d="M4 19v-8h14v8h-4v-4H8v4z" fill="#3b8fdc" />
        </svg>
      </Task>
      <Task label="Store" className="w-[50px]">
        <svg viewBox="0 0 24 24" className="size-6">
          <path d="M7 6V1.500h10V6" fill="none" stroke="#2aa9e8" strokeWidth="2" />
          <rect x="1" y="5" width="22" height="18" rx="2" fill="#f6f6f6" />
          <path d="M7.500 10H12v4H7.500z" fill="#e5502a" /><path d="M12.500 10H17v4h-4.500z" fill="#7bb526" />
          <path d="M7.500 14.500H12v4H7.500z" fill="#22a3e6" /><path d="M12.500 14.500H17v4h-4.500z" fill="#f8b91c" />
        </svg>
      </Task>
      <Task label="SOLIDWORKS 2022" className="w-12 bg-[#55525b]" bar="bg-[#7ab4e6]">
        <svg viewBox="0 0 26 24" className="h-6 w-[26px]" fontFamily="Liberation Sans" fontWeight="bold">
          <path d="M2 4 9 1l14 2v14l-11 5L2 18z" fill="#b01218" />
          <path d="M2 4 9 1l14 2-11 2z" fill="#e2494d" />
          <text x="4" y="14" fontSize="10" fill="#fff">S</text>
          <text x="12" y="14" fontSize="10" fill="#fff">W</text>
          <path d="M6 16h20v8H6z" fill="#111" />
          <text x="7" y="23" fontSize="8" fill="#fff">2022</text>
        </svg>
      </Task>
      <Task label="Lecteur" className="ml-[5px] w-10" bar="bg-[#7ab4e6]">
        <svg viewBox="0 0 24 24" className="size-6">
          <defs><linearGradient id="player" x1="0" y1="0" x2="1" y2="1"><stop stopColor="#f5923c" /><stop offset="1" stopColor="#a468e0" /></linearGradient></defs>
          <circle cx="12" cy="12" r="10.800" fill="#3a3a40" stroke="url(#player)" strokeWidth="2.200" />
          <path d="M9 6.500v11l8-5.500z" fill="#fff" />
        </svg>
      </Task>
      <Task label="Internet Download Manager" className="ml-[9px] w-10 border-r-[11px] border-[#5a555d] bg-[#3f6b42]" bar="bg-[#4be03c]">
        <svg viewBox="0 0 24 24" className="ml-[10px] size-6">
          <circle cx="16" cy="8" r="7.500" fill="#2c6cc0" />
          <path d="M11 3c4-3 9-1 10 2-3 3-5 0-6 4s-5 1-4-6z" fill="#a6cf7a" />
          <path d="M10 6C3 6-1 12 2 18c3 4 9 3 11 0-6 2-9-3-3-8z" fill="#f0d03c" stroke="#d8662a" />
          <path d="M8 12l15 2-4 2 1 4-5-1-4 3z" fill="#2fa828" stroke="#15661a" strokeWidth=".7" />
        </svg>
      </Task>
      <Task label="VLC" className="ml-[9px] w-10" bar="bg-[#7ab4e6]">
        <svg viewBox="0 0 22 24" className="h-6 w-[22px]">
          <path d="M3 17h16l2 6H1z" fill="#f08a1c" />
          <path d="M11 1c1 0 1.500 0 2 2l4 16c-3 2-9 2-12 0L9 3c.5-2 1-2 2-2z" fill="#f08a1c" />
          <path d="M8 7h6l1 4H7zM6 14.500h10l1 3.500c-3 1.500-9 1.500-12 0z" fill="#f4f4f4" />
        </svg>
      </Task>
      <div className="ml-auto flex h-full items-center text-[13px]">
        <button className="flex items-center">
          <svg viewBox="0 0 26 24" className="mr-[6px] h-6 w-[26px]">
            <path d="M17 2c6 5 6 15-2 19-5 2-9 0-11-3 7 1 14-5 13-16z" fill="#f8b53c" />
            <path d="M3 9a3 3 0 0 1 0-6 5 5 0 0 1 9 0 3 3 0 0 1 1 6z" fill="#b9d4f6" />
            <path d="M14 21a3 3 0 0 1 0-5 4 4 0 0 1 8 0 2.500 2.500 0 0 1 0 5z" fill="#c9ddf6" />
          </svg>
          <span className="w-[38px] text-left">26°C</span>
          <span className="w-[66px] text-left">Eclaircies</span>
        </button>
        <button aria-label="Icônes cachées" className="flex w-[38px] justify-center">
          <svg viewBox="0 0 12 8" className="h-2 w-3" fill="none" stroke="#fff" strokeWidth="1.300"><path d="M1 7l5-5 5 5" /></svg>
        </button>
        <button aria-label="Wi-Fi" className="flex w-[22px]">
          <svg viewBox="0 0 14 14" className="size-[14px]" fill="none" stroke="#fff">
            <path d="M1.500 13C1.500 6 6 1.500 13 1.500" stroke="#aaa" /><path d="M4.500 13c0-5 3.500-8.500 8.500-8.500M7.500 13c0-3 2.500-5.500 5.500-5.500" />
            <circle cx="11.500" cy="11.500" r="1.500" fill="#fff" />
          </svg>
        </button>
        <button aria-label="Batterie" className="flex w-6">
          <svg viewBox="0 0 17 14" className="h-[14px] w-[17px]" fill="none" stroke="#fff"><path d="M6 4.500h9v7H5M15 6.500h1.500v3H15M2 1v3M5 1v3M.5 4h6v2a3 3 0 0 1-6 0zM3.500 9v4" /></svg>
        </button>
        <button aria-label="Volume" className="flex w-[25px]">
          <svg viewBox="0 0 17 14" className="h-[14px] w-[17px]" fill="none" stroke="#fff"><path d="M1 5h2.500L7 1.500v11L3.500 9H1zM9.500 5c1 1 1 3 0 4" /><path d="M12 3c2 2.500 2 5.500 0 8M14.500 1.500c3 3.500 3 7.500 0 11" stroke="#888" /></svg>
        </button>
        <button aria-label="Clavier" className="flex w-8">
          <svg viewBox="0 0 23 14" className="h-[14px] w-[23px]" fill="none" stroke="#fff"><path d="M.5.5h22v12H.5z" /><path d="M3 4h17M3 6.500h17" strokeDasharray="2 1" /><path d="M3 9.500h2M6.500 9.500h10M18 9.500h2" /></svg>
        </button>
        <button className="w-[25px] text-[12px]">FRA</button>
        <time className="w-[80px] text-center text-[11px] leading-[18px]">22:08<br />26/08/2024</time>
        <button aria-label="Notifications" className="flex w-[30px] justify-center">
          <svg viewBox="0 0 17 17" className="size-[17px]" fill="none" stroke="#fff" strokeWidth="1.200"><path d="M1 1.500h15v11h-5L8.500 15.500 6 12.500H1z" /></svg>
        </button>
        <span className="mr-1 ml-[14px] h-full w-px bg-[#777]" />
      </div>
    </div>
  );
};

export default function App() {
  return (
    <div className="flex h-screen flex-col overflow-hidden bg-[#f7f7f7] font-['Noto_Sans',sans-serif] text-black">
      <TitleBar />
      <Ribbon />
      <RibbonTabs />
      <div className="flex min-h-0 flex-1">
        <Sidebar />
        <Viewport />
      </div>
      <BottomTabs />
      <StatusBar />
      <Taskbar />
    </div>
  );
}
